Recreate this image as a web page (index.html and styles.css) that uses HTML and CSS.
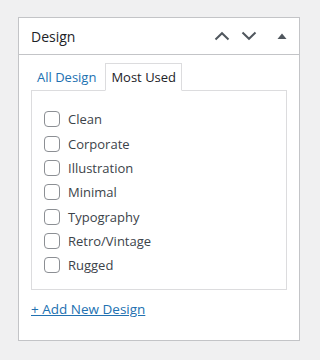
FILE: index.html
```html
<!DOCTYPE html>
<html lang="en">
  <head>
    <meta charset="UTF-8" />
    <meta name="viewport" content="width=device-width, initial-scale=1.0" />
    <title>Design</title>
    <link rel="stylesheet" href="styles.css">
  </head>
  <body>
    <div class="postbox">
      <div class="postbox-header">
        <h2>Design</h2>
        <div class="handle-actions">
          <button class="handle" aria-label="Move up">
            <svg width="16" height="10" viewBox="0 0 16 10"><path d="M1.5 8.5 L8 2.2 L14.5 8.5" fill="none" stroke="#50575e" stroke-width="2"/></svg>
          </button>
          <button class="handle" aria-label="Move down">
            <svg width="16" height="10" viewBox="0 0 16 10"><path d="M1.5 1.5 L8 7.8 L14.5 1.5" fill="none" stroke="#50575e" stroke-width="2"/></svg>
          </button>
          <button class="handle toggle" aria-label="Toggle panel">
            <svg width="10" height="6" viewBox="0 0 10 6"><path d="M0.5 6 L5 0.5 L9.5 6 Z" fill="#50575e"/></svg>
          </button>
        </div>
      </div>

      <div class="inside">
        <ul class="tabs">
          <li><a href="#">All Design</a></li>
          <li class="active">Most Used</li>
        </ul>

        <div class="tabs-panel">
          <ul class="checklist">
            <li><label><input type="checkbox" /> Clean</label></li>
            <li><label><input type="checkbox" /> Corporate</label></li>
            <li><label><input type="checkbox" /> Illustration</label></li>
            <li><label><input type="checkbox" /> Minimal</label></li>
            <li><label><input type="checkbox" /> Typography</label></li>
            <li><label><input type="checkbox" /> Retro/Vintage</label></li>
            <li><label><input type="checkbox" /> Rugged</label></li>
          </ul>
        </div>

        <a class="add-new" href="#">+ Add New Design</a>
      </div>
    </div>
  </body>
</html>
```

FILE: styles.css
```css
body {
  margin: 0;
  padding: 17px 20px 0 18px;
  background: #f0f0f1;
  font-family: "Open Sans", Arial, sans-serif;
  font-size: 13px;
  color: #3c434a;
}

.postbox {
  width: 282px;
  height: 324px;
  background: #fff;
  border: 1px solid #c3c4c7;
  box-sizing: border-box;
}

.postbox-header {
  display: flex;
  align-items: center;
  justify-content: space-between;
  height: 36px;
  border-bottom: 1px solid #c3c4c7;
  padding: 0 12px;
}

.postbox-header h2 {
  margin: 0;
  font-size: 14px;
  font-weight: 400;
  color: #1d2327;
}

.handle-actions {
  display: flex;
  align-items: center;
  gap: 11px;
}

.handle {
  border: none;
  background: none;
  padding: 0;
  display: flex;
  align-items: center;
  cursor: pointer;
}

.handle.toggle {
  margin-left: 9px;
}

.inside {
  padding: 8px 12px 0 12px;
}

.tabs {
  list-style: none;
  margin: 0;
  padding: 0 0 0 6px;
  display: flex;
  align-items: flex-end;
  height: 27px;
}

.tabs li {
  padding: 0 6px 0 0;
  line-height: 26px;
}

.tabs li a {
  color: #2271b1;
  text-decoration: none;
}

.tabs li.active {
  margin-left: 3px;
  padding: 0 5px;
  color: #1d2327;
  background: #fff;
  border: 1px solid #dcdcde;
  border-bottom-color: #fff;
  position: relative;
  top: 1px;
}

.tabs-panel {
  border: 1px solid #dcdcde;
  padding: 16px 12px 12px 12px;
  height: 200px;
  box-sizing: border-box;
}

.checklist {
  list-style: none;
  margin: 0;
  padding: 0;
}

.checklist li {
  height: 24.35px;
  display: flex;
  align-items: center;
}

.checklist label {
  display: flex;
  align-items: center;
}

.checklist input {
  appearance: none;
  width: 16px;
  height: 16px;
  margin: 0 8px 0 0;
  border: 1px solid #8c8f94;
  border-radius: 4px;
  background: #fff;
}

.add-new {
  display: inline-block;
  margin-top: 10px;
  color: #2271b1;
  font-size: 13.5px;
  text-decoration: underline;
}
```
